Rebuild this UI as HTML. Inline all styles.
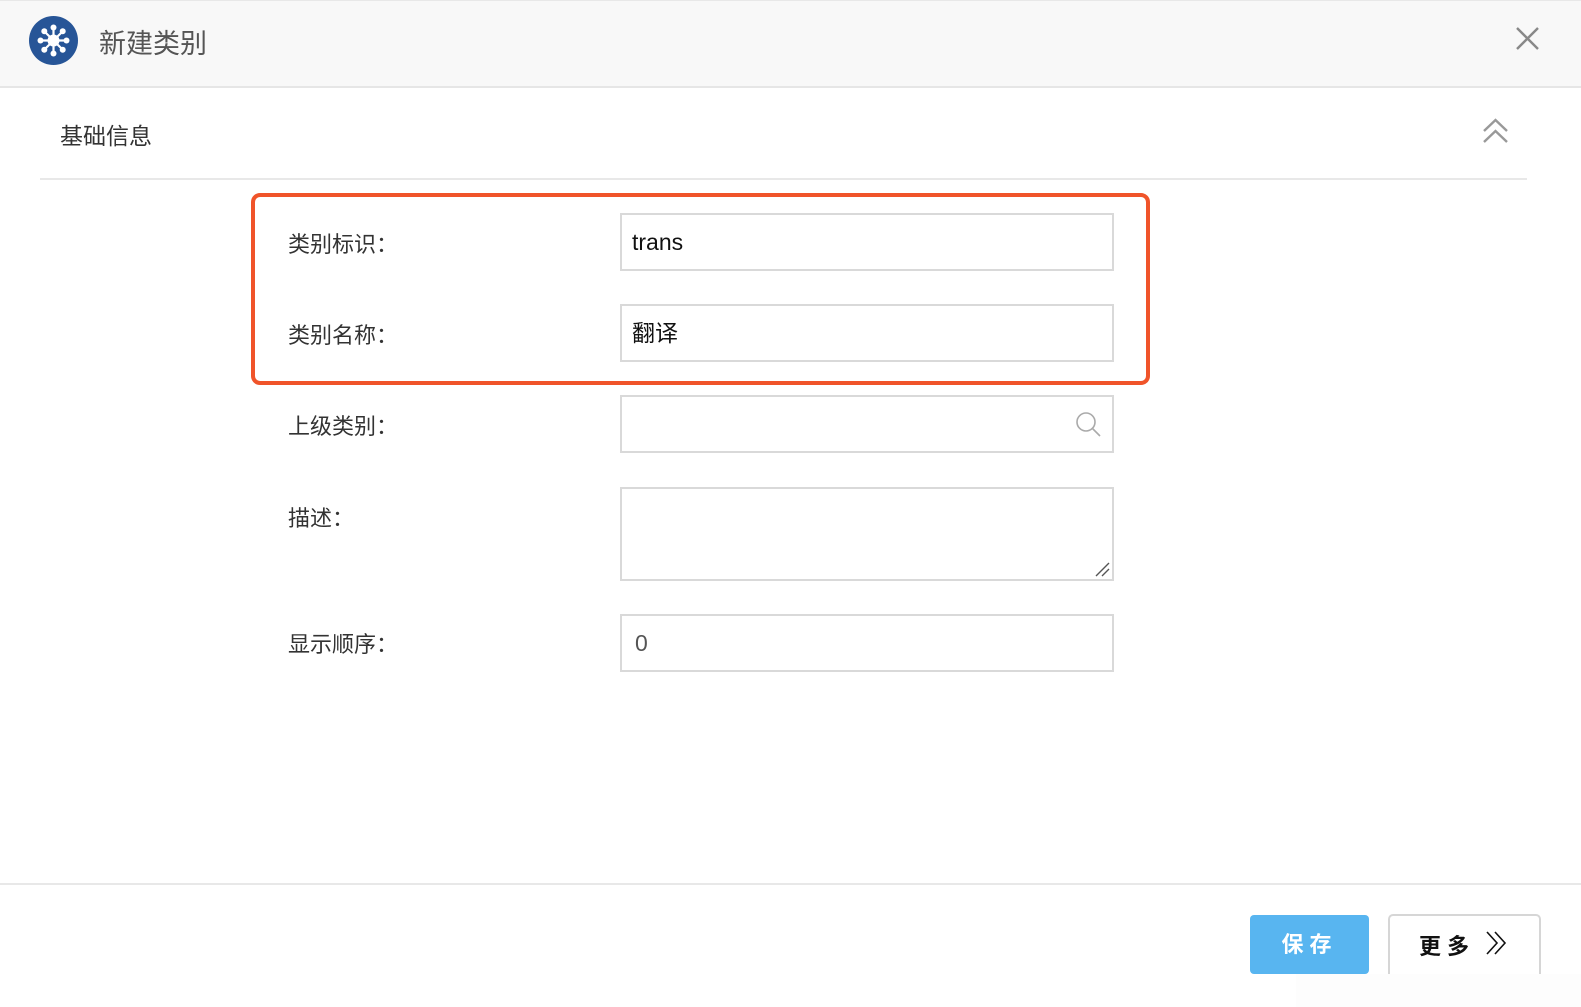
<!DOCTYPE html>
<html><head><meta charset="utf-8"><style>
*{margin:0;padding:0;box-sizing:border-box}
body{width:1581px;height:1007px;background:#fff;position:relative;overflow:hidden;font-family:"Liberation Sans","Noto Sans CJK SC",sans-serif;color:#333}
.hdr{position:absolute;left:0;top:0;width:1581px;height:88px;background:#f8f8f8;border-bottom:2px solid #e6e6e6;border-top:1px solid #e8e8e8}
.title{position:absolute;left:99px;top:21px;font-size:27px;color:#555}
.lbl{position:absolute;left:288px;font-size:22px;color:#333}
.inp{position:absolute;left:620px;width:494px;height:58px;border:2px solid #d9d9d9;background:#fff;font-size:23px;color:#111;padding-left:10px;line-height:54px}
.abs{position:absolute}
</style></head><body>
<div class="hdr">
<svg class="abs" style="left:29px;top:15px" width="49" height="49" viewBox="0 0 49 49">
<circle cx="24.5" cy="24.5" r="24.5" fill="#275597"/>
<g stroke="#fff" stroke-width="2.2">
<line x1="24.5" y1="12" x2="24.5" y2="37"/><line x1="12" y1="24.5" x2="37" y2="24.5"/>
<line x1="15.6" y1="15.6" x2="33.4" y2="33.4"/><line x1="33.4" y1="15.6" x2="15.6" y2="33.4"/></g>
<circle cx="24.5" cy="24.5" r="6" fill="#fff"/>
<g fill="#fff"><circle cx="24.5" cy="11.5" r="3"/><circle cx="24.5" cy="37.5" r="3"/><circle cx="11.5" cy="24.5" r="3"/><circle cx="37.5" cy="24.5" r="3"/>
<circle cx="15.3" cy="15.3" r="3"/><circle cx="33.7" cy="15.3" r="3"/><circle cx="15.3" cy="33.7" r="3"/><circle cx="33.7" cy="33.7" r="3"/></g>
</svg>
<div class="title">新建类别</div>
<svg class="abs" style="left:1516px;top:26px" width="23" height="23" viewBox="0 0 23 23"><path d="M1 1L22 22M22 1L1 22" stroke="#888" stroke-width="2.4"/></svg>
</div>
<div class="abs" style="left:60px;top:117px;font-size:23px;color:#333">基础信息</div>
<svg class="abs" style="left:1483px;top:118px" width="25" height="25" viewBox="0 0 25 25"><path d="M1 13L12.5 2L24 13M1 24L12.5 13L24 24" stroke="#999" stroke-width="2.4" fill="none"/></svg>
<div class="abs" style="left:40px;top:178px;width:1487px;height:2px;background:#e8e8e8"></div>
<div class="abs" style="left:251px;top:193px;width:899px;height:192px;border:4px solid #f0542a;border-radius:9px"></div>
<div class="lbl" style="top:227px">类别标识：</div>
<div class="inp" style="top:213px">trans</div>
<div class="lbl" style="top:318px">类别名称：</div>
<div class="inp" style="top:304px">翻译</div>
<div class="lbl" style="top:409px">上级类别：</div>
<div class="inp" style="top:395px"></div>
<svg class="abs" style="left:1075px;top:411px" width="27" height="27" viewBox="0 0 27 27"><circle cx="11" cy="11" r="9" stroke="#aaa" stroke-width="1.6" fill="none"/><path d="M17.5 17.5L25 25" stroke="#aaa" stroke-width="1.6"/></svg>
<div class="lbl" style="top:501px">描述：</div>
<div class="inp" style="top:487px;height:94px"></div>
<svg class="abs" style="left:1094px;top:561px" width="16" height="16" viewBox="0 0 16 16"><path d="M2 15L15 2M8 15L15 8" stroke="#555" stroke-width="1.4"/></svg>
<div class="lbl" style="top:627px">显示顺序：</div>
<div class="inp" style="top:614px;color:#555;padding-left:13px">0</div>
<div class="abs" style="left:0;top:883px;width:1581px;height:2px;background:#e8e8e8"></div>
<div class="abs" style="left:1250px;top:915px;width:119px;height:59px;background:#58b5f0;border-radius:4px;color:#fff;font-size:22px;font-weight:bold;text-align:center;line-height:59px;letter-spacing:6px">保存</div>
<div class="abs" style="left:1388px;top:914px;width:153px;height:70px;border:2px solid #d6d6d6;border-bottom:none;border-radius:5px 5px 0 0;background:#fff"></div>
<div class="abs" style="left:1419px;top:929px;font-size:22px;font-weight:bold;color:#111;letter-spacing:6px">更多</div>
<svg class="abs" style="left:1486px;top:931px" width="22" height="24" viewBox="0 0 22 24"><path d="M1 1L11 12L1 23M9 1L19 12L9 23" stroke="#111" stroke-width="1.6" fill="none"/></svg>
<div class="abs" style="left:1296px;top:974px;width:285px;height:33px;background:#fdfdfd"></div>
</body></html>
